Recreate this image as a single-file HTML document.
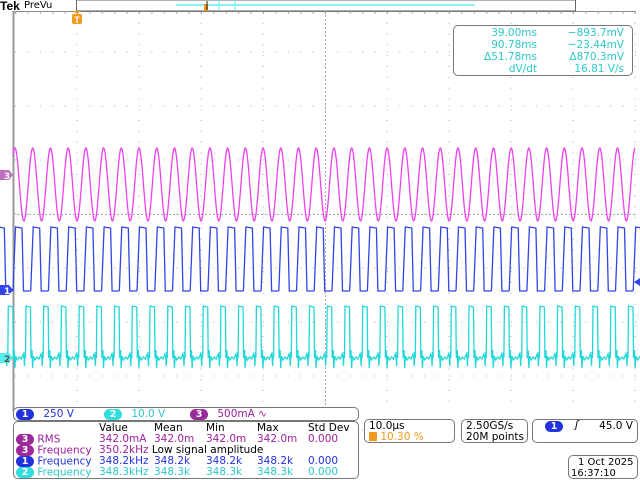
<!DOCTYPE html>
<html><head><style>
*{margin:0;padding:0;box-sizing:border-box}
body{width:640px;height:480px;background:#fff;position:relative;overflow:hidden;font-family:"DejaVu Sans","Liberation Sans",sans-serif;font-size:11px;color:#000}
.a{position:absolute;white-space:nowrap}
.box{position:absolute;border:1px solid #777;border-radius:5px;background:#fff;white-space:nowrap}
.pill{display:inline-block;width:18px;height:11px;border-radius:6px;color:#fff;font-size:9.5px;font-weight:bold;text-align:center;line-height:11px;vertical-align:middle}
</style></head><body>
<svg class="a" style="left:0;top:0" width="640" height="480" id="sv">
<line x1="13" y1="11.5" x2="635" y2="11.5" stroke="#888" stroke-width="1"/>
<line x1="13.5" y1="11" x2="13.5" y2="411" stroke="#999" stroke-width="2"/>
<g id="grid" fill="#aaa"></g>
<line x1="13" y1="214.5" x2="635" y2="214.5" stroke="#aaa" stroke-dasharray="2 2"/>
<line x1="325.5" y1="11" x2="325.5" y2="411" stroke="#aaa" stroke-dasharray="2 2"/>
<path id="m" fill="none" stroke="#f040f0" stroke-width="1.3"/>
<path id="b" fill="none" stroke="#3344e8" stroke-width="1.3"/>
<path id="c" fill="none" stroke="#22d8d8" stroke-width="1.3"/>
<rect x="76.5" y="0" width="499" height="11" fill="#fff" stroke="#666"/>
<line x1="176" y1="5" x2="475" y2="5" stroke="#6ee" stroke-width="1.5"/>
<line x1="219" y1="0" x2="219" y2="11" stroke="#6ee"/>
<line x1="235" y1="0" x2="235" y2="11" stroke="#6ee"/>
<rect x="204" y="4" width="4" height="7" fill="#f39a1d"/>
<line x1="207" y1="1" x2="207" y2="10" stroke="#222"/>
<path d="M73 11h8l-4 3z" fill="#f39a1d"/>
<rect x="72" y="14" width="10" height="10" rx="2" fill="#f39a1d"/>
<text x="77" y="23" font-size="9" fill="#fff" font-weight="bold" text-anchor="middle" font-family="Liberation Sans">T</text>
<path d="M0 170h9l4 5-4 5h-9z" fill="#c070c0"/>
<text x="4" y="179" font-size="9" fill="#fff" font-weight="bold">3</text>
<path d="M0 285h9l4 5-4 5h-9z" fill="#3344e8"/>
<text x="4" y="294" font-size="9" fill="#fff" font-weight="bold">1</text>
<path d="M0 353h9l4 5-4 5h-9z" fill="#5ee"/>
<text x="4" y="362" font-size="9" fill="#555" font-weight="bold">2</text>
<path d="M640 278l-6 4 6 4z" fill="#3344e8"/>
</svg>
<div class="a" style="left:0;top:-1px;font-weight:bold;font-size:12px;font-family:'Liberation Sans',sans-serif">Tek</div>
<div class="a" style="left:24px;top:0;font-size:10px">PreVu</div>
<div class="box" style="left:453px;top:25px;width:180px;height:51px;color:#2cc8c8;font-size:10.5px;line-height:12px;padding-top:1px">
<div class="a" style="right:95px;top:1px;text-align:right">39.00ms<br>90.78ms<br>Δ51.78ms<br>dV/dt</div>
<div class="a" style="right:8px;top:1px;text-align:right">−893.7mV<br>−23.44mV<br>Δ870.3mV<br>16.81 V/s</div>
</div>
<div class="box" style="left:13px;top:407px;width:346px;height:14px;font-size:10.5px;line-height:12px">
<span class="a" style="left:2px;top:0"><span class="pill" style="background:#2233dd">1</span> <b style="color:#2233dd;font-weight:normal;margin-left:6px">250 V</b></span>
<span class="a" style="left:90px;top:0"><span class="pill" style="background:#3dd">2</span> <span style="color:#2cc8c8;margin-left:6px">10.0 V</span></span>
<span class="a" style="left:176px;top:0"><span class="pill" style="background:#9a2a9a">3</span> <span style="color:#a020a0;margin-left:6px">500mA ∿</span></span>
</div>
<div class="box" style="left:13px;top:421px;width:346px;height:58px;font-size:10.5px;line-height:11.2px">
<div class="a" style="left:85px;top:1px">Value</div><div class="a" style="left:140px;top:1px">Mean</div><div class="a" style="left:192px;top:1px">Min</div><div class="a" style="left:243px;top:1px">Max</div><div class="a" style="left:294px;top:1px">Std Dev</div>
<div class="a" style="left:2px;top:12px;color:#a020a0"><span class="pill" style="background:#9a2a9a">3</span> RMS</div>
<div class="a" style="left:85px;top:12px;color:#a020a0">342.0mA</div><div class="a" style="left:140px;top:12px;color:#a020a0">342.0m</div><div class="a" style="left:192px;top:12px;color:#a020a0">342.0m</div><div class="a" style="left:243px;top:12px;color:#a020a0">342.0m</div><div class="a" style="left:294px;top:12px;color:#a020a0">0.000</div>
<div class="a" style="left:2px;top:23px;color:#a020a0"><span class="pill" style="background:#9a2a9a">3</span> Frequency</div>
<div class="a" style="left:85px;top:23px;color:#a020a0">350.2kHz <span style="color:#000">Low signal amplitude</span></div>
<div class="a" style="left:2px;top:34px;color:#2233dd"><span class="pill" style="background:#2233dd">1</span> Frequency</div>
<div class="a" style="left:85px;top:34px;color:#2233dd">348.2kHz</div><div class="a" style="left:140px;top:34px;color:#2233dd">348.2k</div><div class="a" style="left:192px;top:34px;color:#2233dd">348.2k</div><div class="a" style="left:243px;top:34px;color:#2233dd">348.2k</div><div class="a" style="left:294px;top:34px;color:#2233dd">0.000</div>
<div class="a" style="left:2px;top:45px;color:#2cc8c8"><span class="pill" style="background:#3dd">2</span> Frequency</div>
<div class="a" style="left:85px;top:45px;color:#2cc8c8">348.3kHz</div><div class="a" style="left:140px;top:45px;color:#2cc8c8">348.3k</div><div class="a" style="left:192px;top:45px;color:#2cc8c8">348.3k</div><div class="a" style="left:243px;top:45px;color:#2cc8c8">348.3k</div><div class="a" style="left:294px;top:45px;color:#2cc8c8">0.000</div>
</div>
<div class="box" style="left:364px;top:419px;width:91px;height:24px;font-size:10.5px;line-height:11px;padding:1px 0 0 4px">10.0µs<br><span style="color:#f39a1d"><span style="display:inline-block;width:8px;height:9px;background:#f39a1d;vertical-align:-1px"></span> 10.30 %</span></div>
<div class="box" style="left:461px;top:419px;width:67px;height:24px;font-size:10.5px;line-height:11px;padding:1px 0 0 4px">2.50GS/s<br>20M points</div>
<div class="box" style="left:532px;top:419px;width:106px;height:24px;font-size:10.5px;line-height:11px">
<span class="a" style="left:12px;top:1px"><span class="pill" style="background:#2233dd">1</span></span>
<span class="a" style="left:42px;top:0;font-style:italic">ʃ</span>
<span class="a" style="right:4px;top:1px">45.0 V</span></div>
<div class="box" style="left:568px;top:455px;width:70px;height:24px;font-size:10px;line-height:11px">
<span class="a" style="left:9px;top:1px">1 Oct 2025</span><span class="a" style="left:2px;top:12px">16:37:10</span></div>
<script>
var g=document.getElementById('grid'),s='';
var xs=[],ys=[];for(var i=0;i<=10;i++)xs.push(15+62*i);for(var j=0;j<8;j++)ys.push(52+54*j);
for(var i=1;i<xs.length;i++)for(var y=12;y<411;y+=10.8)s+='<rect x="'+(xs[i]-0.5)+'" y="'+y.toFixed(1)+'" width="1" height="1"/>';
for(var j=0;j<ys.length;j++)for(var x=15;x<635;x+=12.4)s+='<rect x="'+x.toFixed(1)+'" y="'+(ys[j]-0.5)+'" width="1" height="1"/>';
for(var x=15;x<635;x+=12.4)s+='<rect x="'+x.toFixed(1)+'" y="11" width="1" height="3"/>';
g.innerHTML=s;
var P=17.72,x0=15,m='',b='',c='';
for(var x=13;x<=635;x+=0.5){var y=184.5-36.5*Math.cos(2*Math.PI*(x-x0)/P);m+=(x==13?'M':'L')+x+' '+y.toFixed(1);}
for(var k=-1;k<36;k++){var s0=x0+k*P-2;
 b+='M'+(s0).toFixed(1)+' 291L'+(s0+2.5).toFixed(1)+' 227L'+(s0+9).toFixed(1)+' 228L'+(s0+10.5).toFixed(1)+' 291L'+(s0+P).toFixed(1)+' 291';
 var p=x0+k*P+10;
 c+='M'+(p-1).toFixed(1)+' 358L'+(p-0.5).toFixed(1)+' 366L'+p.toFixed(1)+' 352L'+(p+0.5).toFixed(1)+' 358L'+(p+1).toFixed(1)+' 306L'+(p+5.5).toFixed(1)+' 307L'+(p+6).toFixed(1)+' 358L'+(p+7).toFixed(1)+' 350L'+(p+7.6).toFixed(1)+' 368L'+(p+8.4).toFixed(1)+' 356L'+(p+10).toFixed(1)+' 360L'+(p+12).toFixed(1)+' 357L'+(p+14).toFixed(1)+' 359L'+(p+16).toFixed(1)+' 354L'+(p+16.7).toFixed(1)+' 358';
}
document.getElementById('m').setAttribute('d',m);
document.getElementById('b').setAttribute('d',b);
document.getElementById('c').setAttribute('d',c);
</script>
</body></html>
